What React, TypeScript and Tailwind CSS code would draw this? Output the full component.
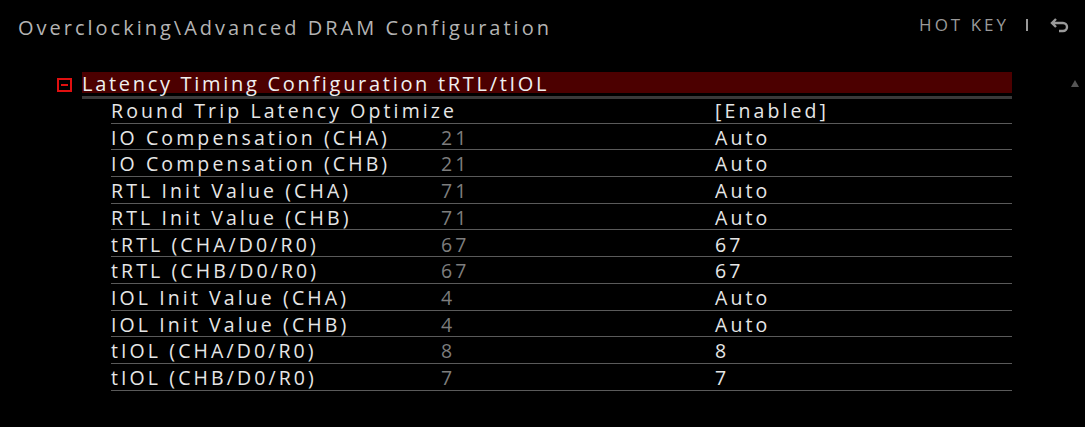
const rows = [
  { label: "Round Trip Latency Optimize", cur: "", value: "[Enabled]" },
  { label: "IO Compensation (CHA)", cur: "21", value: "Auto" },
  { label: "IO Compensation (CHB)", cur: "21", value: "Auto" },
  { label: "RTL Init Value (CHA)", cur: "71", value: "Auto" },
  { label: "RTL Init Value (CHB)", cur: "71", value: "Auto" },
  { label: "tRTL (CHA/D0/R0)", cur: "67", value: "67" },
  { label: "tRTL (CHB/D0/R0)", cur: "67", value: "67" },
  { label: "IOL Init Value (CHA)", cur: "4", value: "Auto" },
  { label: "IOL Init Value (CHB)", cur: "4", value: "Auto" },
  { label: "tIOL (CHA/D0/R0)", cur: "8", value: "8" },
  { label: "tIOL (CHB/D0/R0)", cur: "7", value: "7" },
];

const MinusBox = () => (
  <span className="w-[15px] h-[14px] border-2 border-[#e01010] flex items-center justify-center mr-[10px] shrink-0">
    <span className="w-[7px] h-[2px] bg-[#e01010]" />
  </span>
);

const App = () => {
  return (
    <div className="w-[1085px] h-[427px] bg-black overflow-hidden text-[#e6e6e6] font-['Open_Sans',sans-serif]">
      <div className="flex items-center justify-between h-[56px] pl-[18px] pr-[15px]">
        <h1 className="text-[20px] tracking-[3px] text-[#b4b4b4] whitespace-nowrap">Overclocking\Advanced DRAM Configuration</h1>
        <div className="flex items-center text-[#9a9a9a] text-[17px] tracking-[3px] -mt-[6px]">
          <span className="whitespace-nowrap">HOT KEY</span>
          <span className="w-[2px] h-[12px] bg-[#9a9a9a] ml-[17px] mr-[22px]" />
          <svg width="20" height="16" viewBox="0 0 20 16">
            <path d="M6 2 L2 6 L6 10 M2 6 H13 A4 4 0 0 1 13 14 H9" fill="none" stroke="#9a9a9a" strokeWidth="2.4" />
          </svg>
        </div>
      </div>

      <div className="flex">
        <div className="pl-[57px] w-[1012px] pt-[17px]">
          <div className="flex items-center h-[24px]">
            <MinusBox />
            <div className="flex-1 h-[24px] border-b-[3px] border-[#3a3a3a] box-content">
              <div className="h-[21px] bg-[#4c0000] flex items-center pt-[3px] text-[20px] font-medium tracking-[2.7px] text-[#f0f0f0] whitespace-nowrap">
                Latency Timing Configuration tRTL/tIOL
              </div>
            </div>
          </div>
          <div className="pl-[54px]">
            {rows.map((r) => (
              <div key={r.label} className="h-[26.7px] border-b border-[#5a5a5a] flex items-center text-[19.5px] font-medium tracking-[3.1px] leading-none pt-[2px] whitespace-nowrap">
                <span className="w-[330px]">{r.label}</span>
                <span className="w-[274px] text-[#7d7d7d] font-normal">{r.cur}</span>
                <span>{r.value}</span>
              </div>
            ))}
          </div>
          <div className="flex items-center mt-[28px]">
            <MinusBox />
            <span className="text-[20px] font-medium tracking-[2.7px]">Misc Item</span>
          </div>
        </div>
        <div className="flex-1 flex justify-end pr-[6px] pt-[24px]">
          <span className="w-0 h-0 border-l-[4px] border-r-[4px] border-b-[7px] border-l-transparent border-r-transparent border-b-[#555]" />
        </div>
      </div>
    </div>
  );
};

export default App;
